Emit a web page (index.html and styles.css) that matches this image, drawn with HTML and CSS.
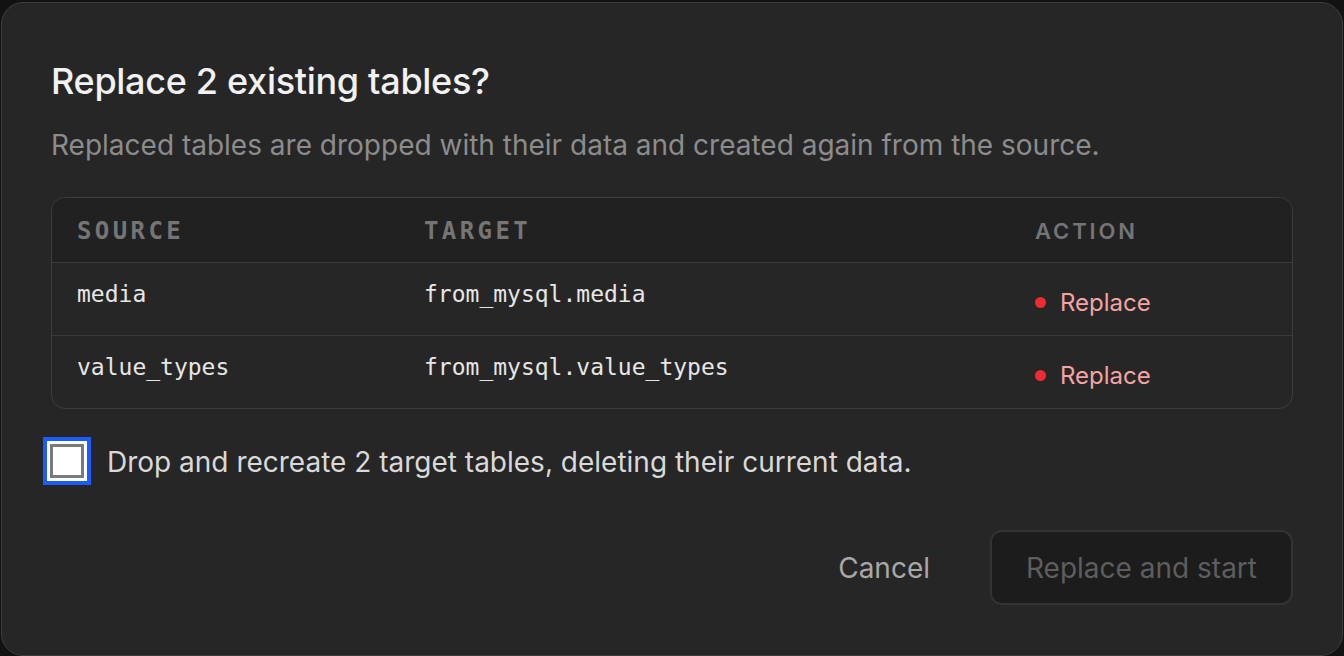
FILE: index.html
```html
<!DOCTYPE html>
<html>
<head>
<meta charset="utf-8">
<link rel="stylesheet" href="styles.css">
</head>
<body>
<div class="backdrop">
  <div class="dialog">
    <h1 class="title">Replace 2 existing tables?</h1>
    <p class="desc">Replaced tables are dropped with their data and created again from the source.</p>
    <div class="table">
      <div class="row head">
        <div class="cell c1 mono">SOURCE</div>
        <div class="cell c2 mono">TARGET</div>
        <div class="cell c3 act-h">ACTION</div>
      </div>
      <div class="row">
        <div class="cell c1 mono">media</div>
        <div class="cell c2 mono">from_mysql.media</div>
        <div class="cell c3 action"><span class="dot"></span>Replace</div>
      </div>
      <div class="row">
        <div class="cell c1 mono">value_types</div>
        <div class="cell c2 mono">from_mysql.value_types</div>
        <div class="cell c3 action"><span class="dot"></span>Replace</div>
      </div>
    </div>
    <label class="check">
      <span class="box"><span class="inner"></span></span>
      <span class="check-text">Drop and recreate 2 target tables, deleting their current data.</span>
    </label>
    <div class="actions">
      <button class="btn cancel">Cancel</button>
      <button class="btn primary">Replace and start</button>
    </div>
  </div>
</div>
</body>
</html>
```

FILE: styles.css
```css
* { box-sizing: border-box; }
html, body { margin: 0; padding: 0; }
body {
  background: #121212;
  width: 1344px;
  height: 656px;
  overflow: hidden;
  font-family: Inter, "Noto Sans", sans-serif;
}
.backdrop {
  padding: 2px 1px 0 1px;
  height: 656px;
}
.dialog {
  height: 654px;
  background: #262626;
  border: 1px solid #3d3d3d;
  border-radius: 22px;
  padding: 56px 49px 0 49px;
  display: flex;
  flex-direction: column;
}
.title {
  margin: 0;
  font-size: 36px;
  line-height: 44px;
  font-weight: 500;
  color: #f2f2f2;
  letter-spacing: -0.3px;
}
.desc {
  margin: 25px 0 0 0;
  font-size: 28px;
  line-height: 34px;
  color: #8c8c8c;
}
.table {
  margin-top: 35px;
  border: 1px solid #3d3d3d;
  border-radius: 14px;
  overflow: hidden;
}
.row {
  display: flex;
  height: 73px;
  align-items: center;
  border-top: 1px solid #3a3a3a;
}
.row.head {
  border-top: none;
  height: 64px;
  background: #212121;
}
.cell { padding-left: 25px; }
.c1 { width: 347px; }
.c2 { width: 611px; }
.c3 { flex: 1; }
.mono {
  font-family: "DejaVu Sans Mono", "Liberation Mono", monospace;
  font-size: 23px;
  color: #e6e6e6;
  padding-bottom: 10px;
}
.head .mono {
  color: #757575;
  letter-spacing: 3.4px;
  font-size: 24px;
  font-weight: 600;
  padding-bottom: 0;
  padding-top: 2px;
}
.act-h {
  font-size: 22px;
  font-weight: 600;
  letter-spacing: 2.9px;
  color: #757575;
  padding-top: 2px;
}
.action {
  display: flex;
  align-items: center;
  font-size: 24px;
  color: #f5a3a3;
  padding-top: 6px;
}
.dot {
  width: 11px;
  height: 11px;
  border-radius: 50%;
  background: #ef2a33;
  margin-right: 14px;
}
.check {
  display: flex;
  align-items: center;
  margin-top: 28px;
  margin-left: -8px;
}
.box {
  width: 48px;
  height: 48px;
  border: 4px solid #1a5cff;
  background: #fff;
  padding: 3px;
  display: flex;
}
.inner {
  flex: 1;
  border: 3px solid #7a7a7a;
  background: #fff;
}
.check-text {
  margin-left: 16px;
  font-size: 28px;
  color: #d9d9d9;
  padding-top: 1px;
}
.actions {
  display: flex;
  justify-content: flex-end;
  align-items: center;
  margin-top: 45px;
  gap: 60px;
}
.btn {
  font-family: Inter, "Noto Sans", sans-serif;
  font-size: 28px;
  background: none;
  border: none;
  padding: 0;
}
.cancel { color: #a8a8a8; }
.primary {
  width: 303px;
  height: 75px;
  background: #1c1c1c;
  border: 2px solid #333;
  border-radius: 12px;
  color: #5e5e5e;
}
```
